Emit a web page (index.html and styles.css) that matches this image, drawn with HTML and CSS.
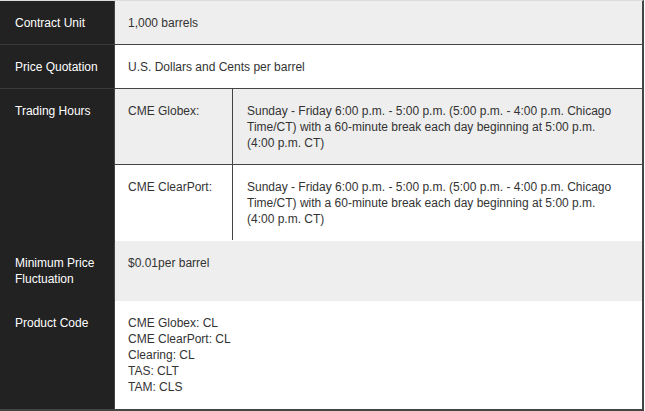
FILE: index.html
```html
<!DOCTYPE html>
<html>
<head>
<meta charset="utf-8">
<link rel="stylesheet" href="styles.css">
</head>
<body>
<div class="spec">
  <div class="row shade sep">
    <div class="label">Contract Unit</div>
    <div class="value">1,000 barrels</div>
  </div>
  <div class="row sep">
    <div class="label">Price Quotation</div>
    <div class="value">U.S. Dollars and Cents per barrel</div>
  </div>
  <div class="row">
    <div class="label">Trading Hours</div>
    <div class="nested">
      <div class="sub shade sep">
        <div class="sub-name">CME Globex:</div>
        <div class="sub-text">Sunday - Friday 6:00 p.m. - 5:00 p.m. (5:00 p.m. - 4:00 p.m. Chicago Time/CT) with a 60-minute break each day beginning at 5:00 p.m. (4:00 p.m. CT)</div>
      </div>
      <div class="sub">
        <div class="sub-name">CME ClearPort:</div>
        <div class="sub-text">Sunday - Friday 6:00 p.m. - 5:00 p.m. (5:00 p.m. - 4:00 p.m. Chicago Time/CT) with a 60-minute break each day beginning at 5:00 p.m. (4:00 p.m. CT)</div>
      </div>
    </div>
  </div>
  <div class="row shade">
    <div class="label">Minimum Price Fluctuation</div>
    <div class="value">$0.01per barrel</div>
  </div>
  <div class="row last">
    <div class="label">Product Code</div>
    <div class="value">CME Globex: CL<br>CME ClearPort: CL<br>Clearing: CL<br>TAS: CLT<br>TAM: CLS</div>
  </div>
</div>
</body>
</html>
```
FILE: styles.css
```css
body {
  margin: 0;
  background: #fff;
  font-family: "Liberation Sans", Arial, sans-serif;
  font-size: 12px;
  line-height: 16px;
}
.spec {
  width: 642px;
  border-top: 1px solid #dcdcdc;
  border-right: 2px solid #444;
  border-bottom: 2px solid #444;
}
.row {
  display: flex;
  background: #fff;
}
.row.shade {
  background: #eeeeee;
}
.label {
  width: 99px;
  flex: none;
  padding: 14px 0 13px 15px;
  background: #222;
  color: #fff;
  border-right: 1px solid #444;
  border-bottom: 1px solid #222;
}
.value {
  flex: 1;
  padding: 14px 14px 13px 13px;
  color: #333;
  border-bottom: 1px solid transparent;
}
.row.sep .label {
  border-bottom-color: #3a3a3a;
}
.row.sep .value {
  border-bottom-color: #444;
}
.row.last .label,
.row.last .value {
  border-bottom: 0;
}
.row.last .value {
  padding-bottom: 14px;
}
.nested {
  flex: 1;
  display: flex;
  flex-direction: column;
}
.sub {
  display: flex;
  background: #fff;
  border-bottom: 1px solid #fff;
  color: #333;
}
.sub.shade {
  background: #eeeeee;
}
.sub.sep {
  border-bottom-color: #444;
}
.sub-name {
  width: 104px;
  flex: none;
  padding: 14px 0 13px 13px;
  border-right: 1px solid #444;
}
.sub-text {
  flex: 1;
  padding: 14px 24px 13px 14px;
}
```
